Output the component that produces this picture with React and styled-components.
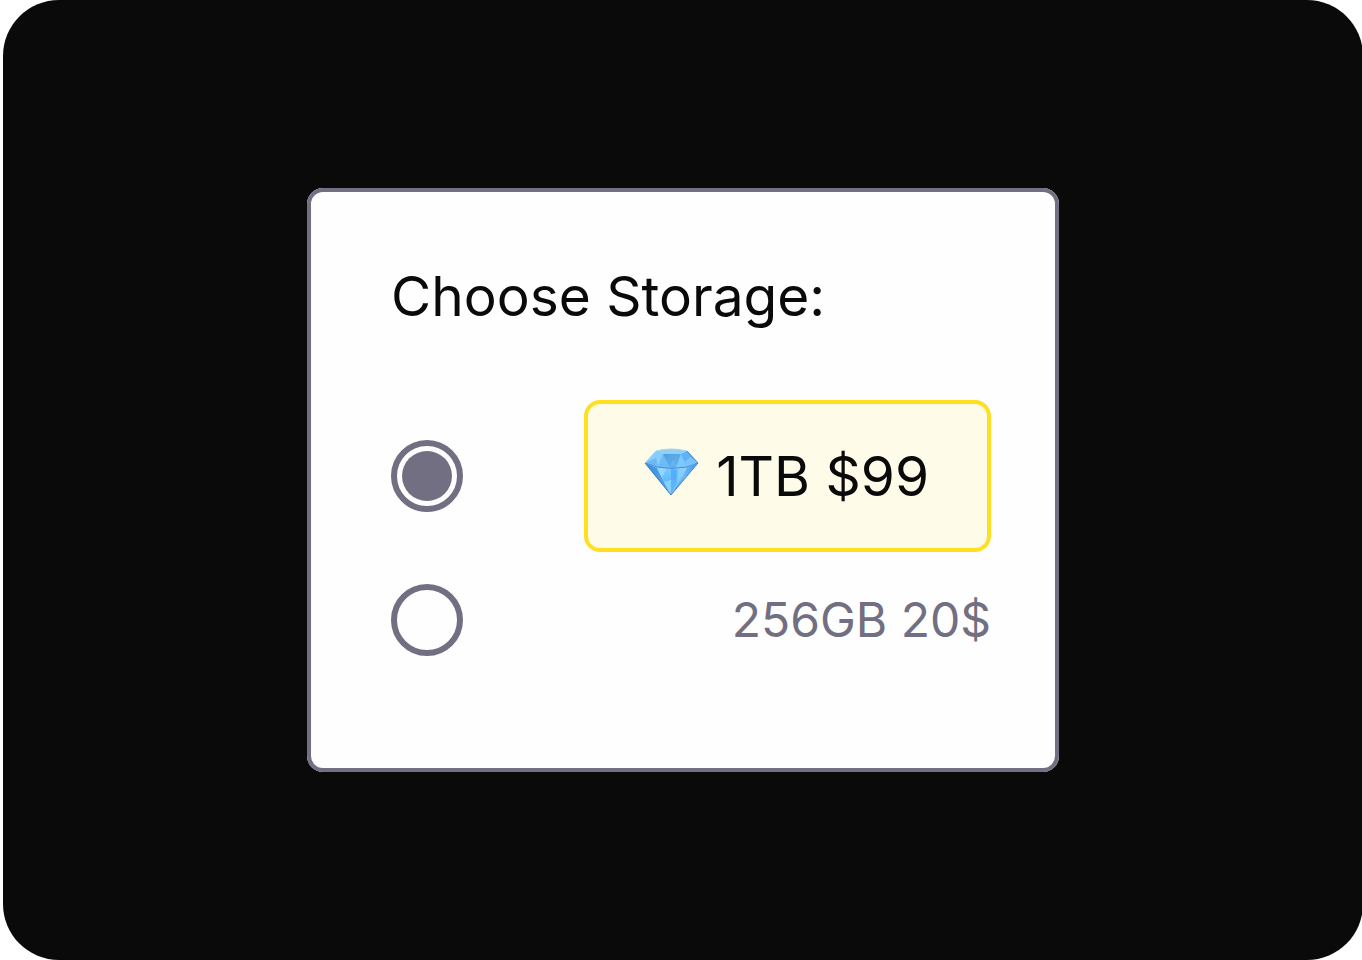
import React, { useState } from 'react'
import styled, { createGlobalStyle } from 'styled-components'

const GlobalStyle = createGlobalStyle`
*{
  box-sizing:border-box;
}
body{
  margin:0;
  background-color:#ffffff;
  color:#0a0a0a;
  font-family:Inter, "Liberation Sans", sans-serif;
  overflow-x:hidden;
}
`
const Stage = styled.main`
display:flex;
align-items:center;
justify-content:center;
min-height:100vh;
margin:0 -1px 0 3px;
background-color:#0a0a0a;
border-radius:56px;
`
const Card = styled.fieldset`
width:100%;
max-width:752px;
margin:0;
padding:64px 64px 112px 80px;
background-color:#fefefe;
border:4px solid #716f81;
border-radius:16px;
`
const Title = styled.h1`
margin:0 0 64px;
font-size:55px;
font-weight:400;
line-height:80px;
`
const Options = styled.div`
display:flex;
flex-direction:column;
gap:32px;
`
const Option = styled.div`
display:flex;
align-items:center;
justify-content:space-between;
`
const Radio = styled.input`
appearance:none;
width:72px;
height:72px;
margin:0;
padding:5px;
border:6px solid #716f81;
border-radius:50%;
cursor:pointer;
&:checked{
  background-color:#716f81;
  background-clip:content-box;
}
`
const Label = styled.label`
display:flex;
align-items:center;
gap:16px;
color:${({$featured}) => $featured ? "#0a0a0a" : "#716f81"};
font-size:${({$featured}) => $featured ? "55px" : "48px"};
line-height:72px;
cursor:pointer;
`
const Highlight = styled(Label)`
padding:36px 58px 36px 56px;
background-color:#fefbe8;
border:4px solid #ffdf20;
border-radius:16px;
`
const DiamondSvg = styled.svg`
width:56px;
height:56px;
flex-shrink:0;
`

const Diamond = () => {
  return (
    <DiamondSvg viewBox="1 0 56 56" aria-hidden="true">
      <defs>
        <linearGradient id="left" x1="0" y1="0" x2="1" y2="1">
          <stop offset="0" stopColor="#3f8cdb"/>
          <stop offset="1" stopColor="#52abf5"/>
        </linearGradient>
        <linearGradient id="middle" x1="0" y1="0" x2="0" y2="1">
          <stop offset="0" stopColor="#7ccaff"/>
          <stop offset="0.5" stopColor="#5fbbfd"/>
          <stop offset="1" stopColor="#7cc9fb"/>
        </linearGradient>
        <linearGradient id="right" x1="1" y1="0" x2="0" y2="1">
          <stop offset="0" stopColor="#4693e6"/>
          <stop offset="0.5" stopColor="#6bbcfb"/>
          <stop offset="1" stopColor="#4897e4"/>
        </linearGradient>
        <linearGradient id="table" x1="0" y1="0" x2="1" y2="1">
          <stop offset="0" stopColor="#4f9fe0"/>
          <stop offset="1" stopColor="#68b6f0"/>
        </linearGradient>
      </defs>
      {/* crown */}
      <path d="M2 15 13 3Q28-1 44 3L55 15 44 20Q28 22 14 20Z" fill="#70c0fb"/>
      <path d="M2 15 13 3 20 6 15 19Z" fill="#86ccfd"/>
      <path d="M2 15 13 10 15 19Z" fill="#68b9f5"/>
      <path d="M20 6 15 19 27 20Z" fill="#6bbbf6"/>
      <path d="M20 6H38L33 20H27Z" fill="url(#table)"/>
      <path d="M27 18 30 11 34 18Z" fill="#68b3ec"/>
      <path d="M38 6 44 19 33 20Z" fill="#7bc9fe"/>
      <path d="M38 6 44 3 55 15 44 19Z" fill="#60b2f8"/>
      <path d="M47 9 55 15 44 19 42 14Z" fill="#78c4fd"/>
      <path d="M13 3Q28-1 44 3L38 6H20Z" fill="#93cff5"/>
      {/* pavilion */}
      <path d="M2 15 14 20 28 47Z" fill="url(#left)"/>
      <path d="M14 20Q28 22 44 20L28 47Z" fill="url(#middle)"/>
      <path d="M44 20 55 15 28 47Z" fill="url(#right)"/>
      <path d="M14 20 23 21 19 30Z" fill="#92d5ff"/>
      <path d="M28 21 34 22 33 35 28 32Z" fill="#54aefa"/>
      <path d="M36 21 44 20 34 35Z" fill="#85d0ff"/>
      <path d="M21 34 28 32 33 35 28 47Z" fill="#86d0fd"/>
      <path d="M28 32 33 35 28 47Z" fill="#5eb2f5"/>
      <path d="M2 15 14 19Q28 22 44 19L55 15" fill="none" stroke="#4492dc" strokeWidth="1"/>
      <path d="M2 15 28 47" fill="none" stroke="#3677be" strokeWidth="1"/>
      <path d="M55 15 28 47" fill="none" stroke="#4a87c9" strokeWidth="1"/>
      <path d="M2 15 13 3Q28-1 44 3" fill="none" stroke="#a8d8f4" strokeWidth="1"/>
      <path d="M44 3 55 15" fill="none" stroke="#4d88c8" strokeWidth="1"/>
    </DiamondSvg>
  )
}

const App = () => {
  const [storage, setStorage] = useState('1tb')

  return (
    <>
      <GlobalStyle/>
      <Stage>
        <Card aria-labelledby="storage-title">
          <Title id="storage-title">Choose Storage:</Title>
          <Options>
            <Option>
              <Radio
                type="radio"
                id="storage-1tb"
                name="storage"
                value="1tb"
                checked={storage === '1tb'}
                onChange={(e) => setStorage(e.target.value)}
              />
              <Highlight htmlFor="storage-1tb" $featured>
                <Diamond/>
                1TB $99
              </Highlight>
            </Option>
            <Option>
              <Radio
                type="radio"
                id="storage-256gb"
                name="storage"
                value="256gb"
                checked={storage === '256gb'}
                onChange={(e) => setStorage(e.target.value)}
              />
              <Label htmlFor="storage-256gb">256GB 20$</Label>
            </Option>
          </Options>
        </Card>
      </Stage>
    </>
  )
}

export default App
